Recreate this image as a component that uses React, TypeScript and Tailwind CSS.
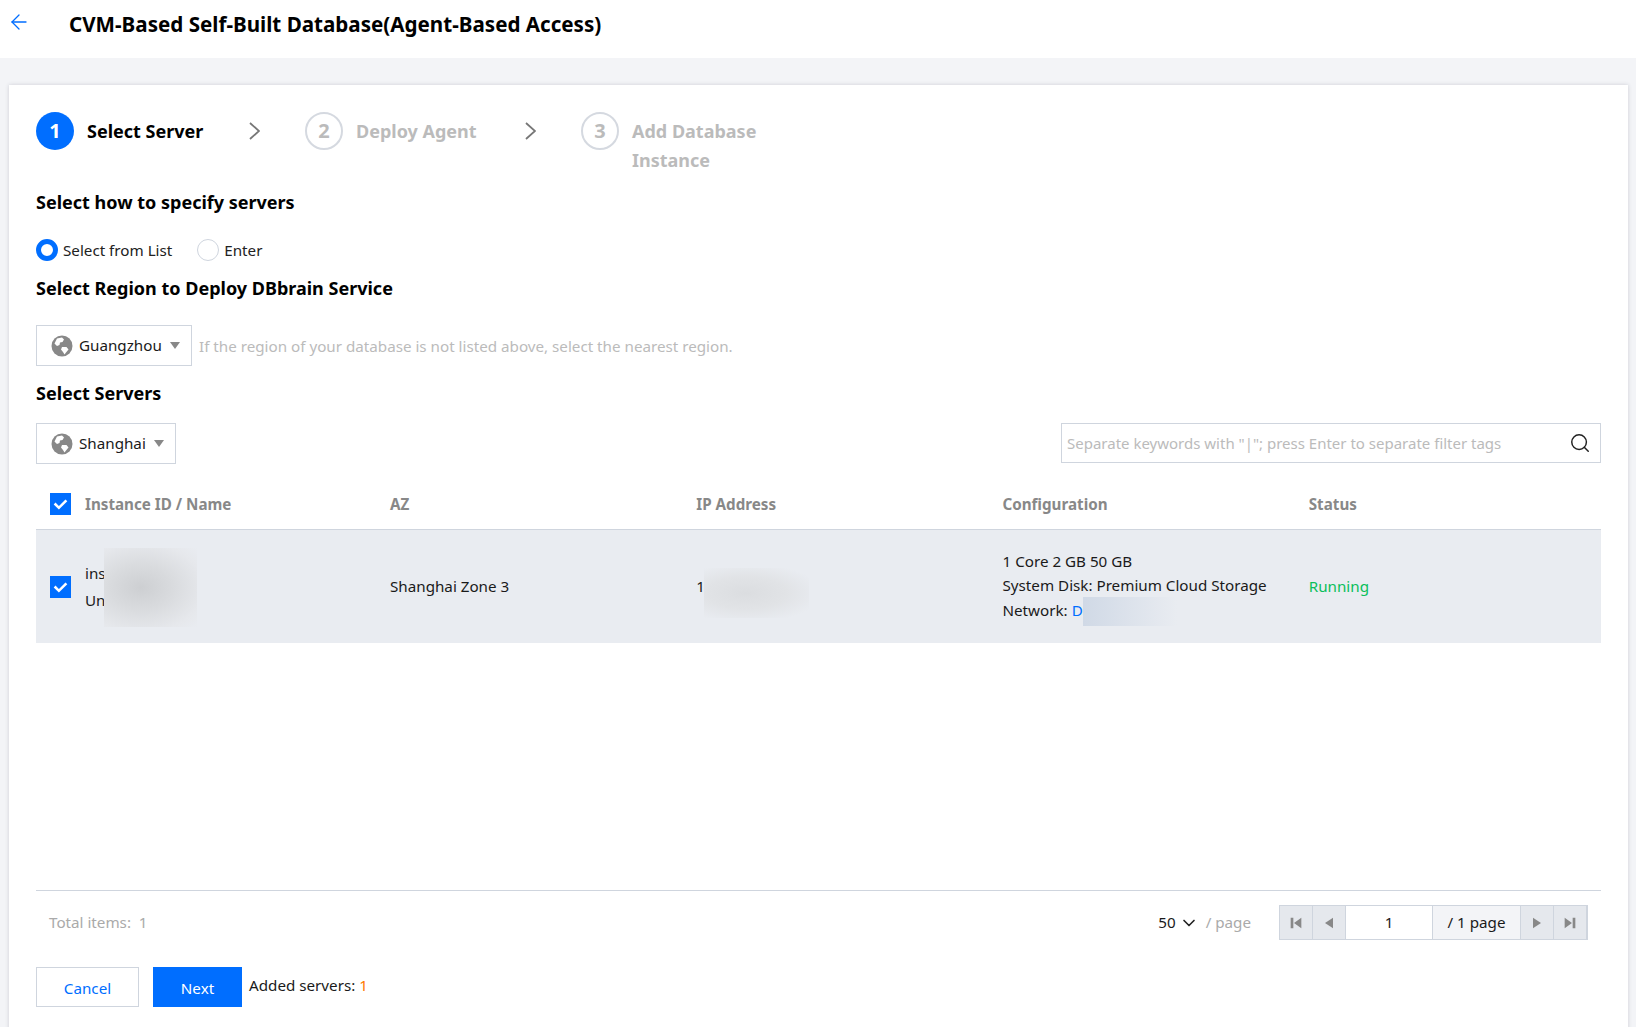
import { ArrowLeft, ChevronDown, Search } from "lucide-react";

const font = "font-['Noto_Sans',_'Open_Sans',_sans-serif]";

function Globe() {
  return (
    <svg viewBox="0 0 22 22" className="w-[22px] h-[22px] shrink-0">
      <circle cx="11" cy="11" r="10.5" fill="#888" />
      <path
        d="M6 3.5 L11 2.5 L13 4.5 L11.5 7 L9 7.5 L8.5 10 L6 11 L3.5 8.5 Z M11 12 L15.5 12 L17.5 14.5 L15 17.5 L13.5 19.5 L12 17 L10 14.5 Z"
        fill="#fff"
      />
    </svg>
  );
}

function RegionSelect({ label, width }: { label: string; width: string }) {
  return (
    <div className={`${width} h-[41px] border border-[#cfd5de] flex items-center pl-[14px] shrink-0`}>
      <Globe />
      <span className="ml-[6px] text-[15.2px] text-[#1a1a1a]">{label}</span>
      <span className="ml-[8px] w-0 h-0 border-x-[5.5px] border-x-transparent border-t-[7px] border-t-[#888]" />
    </div>
  );
}

function Checkbox() {
  return (
    <div className="w-[21px] h-[22px] bg-[#006eff] flex items-center justify-center shrink-0">
      <svg viewBox="0 0 14 14" className="w-[15px] h-[15px]">
        <path d="M1.5 7 L5.5 11 L12.5 4" fill="none" stroke="#fff" strokeWidth="2.4" />
      </svg>
    </div>
  );
}

function StepChevron() {
  return (
    <svg viewBox="0 0 11 18" className="w-[11px] h-[18px] mt-[10px] shrink-0">
      <path d="M1 1 L10 9 L1 17" fill="none" stroke="#777" strokeWidth="1.8" />
    </svg>
  );
}

function Step({ n, label, active, width }: { n: number; label: string; active?: boolean; width: string }) {
  return (
    <div className={`flex items-start ${width}`}>
      <div
        className={
          active
            ? "w-[38px] h-[38px] rounded-full bg-[#006eff] text-white flex items-center justify-center text-[20px] font-bold shrink-0"
            : "w-[38px] h-[38px] rounded-full border-2 border-[#d5d9e0] text-[#bbb] flex items-center justify-center text-[20px] font-bold shrink-0"
        }
      >
        {n}
      </div>
      <div className={`ml-[13px] text-[18px] font-bold leading-[29px] mt-[5px] ${active ? "text-black" : "text-[#bbb]"}`}>
        {label}
      </div>
    </div>
  );
}

function PagerArrow({ d }: { d: string }) {
  return (
    <div className="w-[33px] bg-[#e5e8ed] border-r border-[#cfd5de] flex items-center justify-center">
      <svg viewBox="0 0 12 12" className="w-[16px] h-[16px]">
        <path d={d} fill="#888" />
      </svg>
    </div>
  );
}

export default function App() {
  return (
    <div className={`h-[1027px] overflow-hidden bg-[#f3f4f7] ${font}`}>
      {/* Header */}
      <div className="h-[58px] bg-white flex items-center">
        <ArrowLeft className="w-[24px] h-[24px] ml-[7px] mb-[14px] text-[#006eff]" strokeWidth={1.3} />
        <h1 className="ml-[38px] mb-[9px] text-[20.6px] font-bold text-black">
          CVM-Based Self-Built Database(Agent-Based Access)
        </h1>
      </div>

      {/* Card */}
      <div className="ml-[9px] w-[1619px] h-[960px] mt-[27px] bg-white shadow-[0_0_4px_rgba(54,58,80,0.2)] px-[27px] pt-[27px]">
        {/* Steps */}
        <div className="flex items-start h-[79px]">
          <Step n={1} label="Select Server" active width="w-[213px]" />
          <StepChevron />
          <Step n={2} label="Deploy Agent" width="w-[220px] ml-[45px]" />
          <StepChevron />
          <Step n={3} label="Add Database Instance" width="w-[200px] ml-[45px]" />
        </div>

        <h2 className="text-[18px] font-bold text-black leading-[26px] mt-[-2px]">Select how to specify servers</h2>

        {/* Radios */}
        <div className="flex items-center mt-[23px] h-[24px] text-[15.2px] text-[#222]">
          <div className="w-[22px] h-[22px] rounded-full border-[5px] border-[#006eff] bg-white" />
          <span className="ml-[5px]">Select from List</span>
          <div className="w-[22px] h-[22px] rounded-full border border-[#cfd5de] ml-[25px]" />
          <span className="ml-[5px]">Enter</span>
        </div>

        <h2 className="text-[18px] font-bold text-black leading-[26px] mt-[13px]">Select Region to Deploy DBbrain Service</h2>

        <div className="flex items-center mt-[24px]">
          <RegionSelect label="Guangzhou" width="w-[156px]" />
          <span className="ml-[7px] mt-[2px] text-[15.2px] text-[#bbb]">If the region of your database is not listed above, select the nearest region.</span>
        </div>

        <h2 className="text-[18px] font-bold text-black leading-[26px] mt-[14px]">Select Servers</h2>

        {/* Toolbar */}
        <div className="flex items-start justify-between mt-[17px] w-[1565px]">
          <RegionSelect label="Shanghai" width="w-[140px]" />
          <div className="w-[540px] h-[40px] border border-[#cfd5de] flex items-center justify-between pl-[5px] pr-[9px]">
            <span className="text-[15px] text-[#bbb]">Separate keywords with "|"; press Enter to separate filter tags</span>
            <Search className="w-[22px] h-[22px] text-[#222]" strokeWidth={1.6} />
          </div>
        </div>

        {/* Table */}
        <div className="w-[1565px] mt-[7px]">
          <div className="grid grid-cols-[340px_repeat(4,1fr)] h-[59px] pt-[8px] items-center border-b border-[#cfd5de] text-[15.2px] font-bold text-[#888]">
            <div className="flex items-center pl-[14px]">
              <Checkbox />
              <span className="ml-[14px]">Instance ID / Name</span>
            </div>
            <div className="pl-[14px]">AZ</div>
            <div className="pl-[14px]">IP Address</div>
            <div className="pl-[14px]">Configuration</div>
            <div className="pl-[14px]">Status</div>
          </div>
          <div className="grid grid-cols-[340px_repeat(4,1fr)] h-[113px] items-center bg-[#e9ecf1] text-[15.2px] text-[#1a1a1a]">
            <div className="relative self-stretch flex items-center pl-[14px]">
              <Checkbox />
              <div className="ml-[14px] leading-[27px]">
                <div>ins</div>
                <div>Un</div>
              </div>
              {/* masked instance id */}
              <div className="absolute left-[68px] top-[18px] w-[93px] h-[79px] bg-[radial-gradient(ellipse_at_40%_50%,_#cdcfd2_0%,_#d9dbde_40%,_#e6e8ec_80%,_#e9ecf1_100%)]" />
            </div>
            <div className="pl-[14px]">Shanghai Zone 3</div>
            <div className="relative pl-[14px]">
              1
              {/* masked ip */}
              <div className="absolute left-[22px] top-[-7px] w-[105px] h-[50px] bg-[radial-gradient(ellipse_at_40%_50%,_#dbdde0_0%,_#e1e3e6_45%,_#e9ecf1_85%)]" />
            </div>
            <div className="relative pl-[14px] mb-[2px] leading-[24.5px]">
              <div>1 Core 2 GB 50 GB</div>
              <div>System Disk: Premium Cloud Storage</div>
              <div>
                Network: <span className="text-[#006eff]">D</span>
              </div>
              {/* masked vpc */}
              <div className="absolute left-[94px] top-[48px] w-[94px] h-[29px] bg-gradient-to-r from-[#d0d9e6] to-[#e9ecf1]" />
            </div>
            <div className="pl-[14px] text-[#0abf5b]">Running</div>
          </div>
        </div>

        {/* Pagination */}
        <div className="w-[1565px] mt-[247px] border-t border-[#cfd5de] h-[77px] flex items-center pl-[13px] pr-[13px] pb-[13px] text-[15.2px]">
          <span className="text-[#aaa] flex-1">Total items:&nbsp; 1</span>
          <span className="text-[#1a1a1a]">50</span>
          <ChevronDown className="w-[20px] h-[20px] ml-[3px] text-[#222]" />
          <span className="ml-[7px] text-[#aaa]">/ page</span>
          <div className="ml-[28px] w-[309px] h-[35px] border border-[#cfd5de] flex">
            <PagerArrow d="M2 2 H4 V10 H2 Z M10 2 V10 L4.5 6 Z" />
            <PagerArrow d="M9 2 V10 L3 6 Z" />
            <div className="w-[87px] bg-white border-r border-[#cfd5de] flex items-center justify-center text-[#1a1a1a]">1</div>
            <div className="flex-1 bg-[#f3f4f7] border-r border-[#cfd5de] flex items-center justify-center text-[#1a1a1a]">/ 1 page</div>
            <PagerArrow d="M3 2 V10 L9 6 Z" />
            <PagerArrow d="M2 2 V10 L7.5 6 Z M8 2 H10 V10 H8 Z" />
          </div>
        </div>

        {/* Actions */}
        <div className="flex items-start">
          <button className="w-[103px] h-[40px] pt-[2px] border border-[#cfd5de] bg-white text-[15.2px] text-[#006eff]">Cancel</button>
          <button className="w-[89px] h-[40px] pt-[2px] ml-[14px] bg-[#006eff] text-[15.2px] text-white">Next</button>
          <span className="ml-[7px] mt-[7px] text-[15.2px] text-[#1a1a1a]">
            Added servers: <span className="text-[#ff7800]">1</span>
          </span>
        </div>
      </div>
    </div>
  );
}
